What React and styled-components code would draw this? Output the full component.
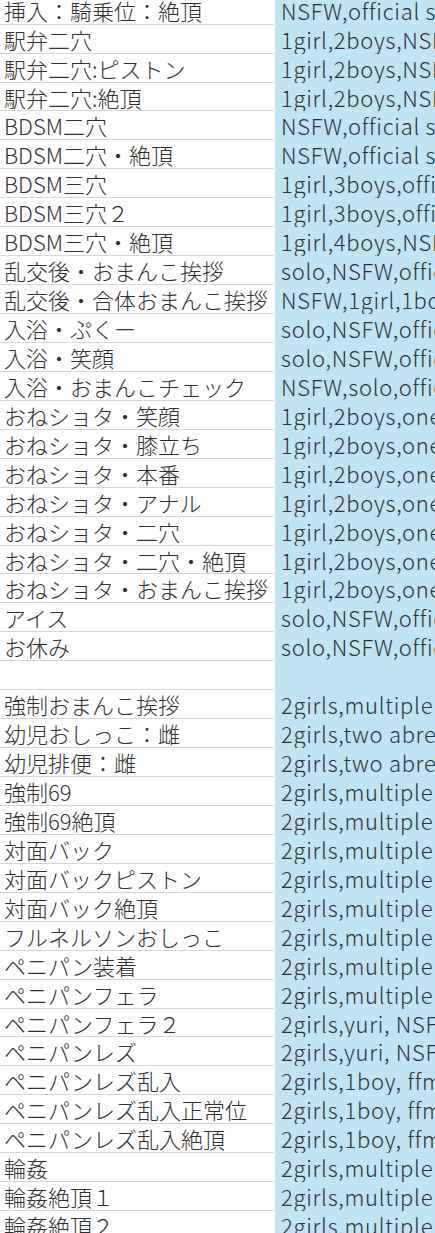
import React from 'react';
import styled, { createGlobalStyle } from 'styled-components';

const GlobalStyle = createGlobalStyle`
  html, body {
    margin: 0;
    padding: 0;
    background: #ffffff;
    overflow: hidden;
  }
  body {
    font-family: "Noto Sans CJK JP", "Noto Sans", sans-serif;
  }
`;

const rows = [
  ['挿入：騎乗位：絶頂', 'NSFW,official style,'],
  ['駅弁二穴', '1girl,2boys,NSFW,'],
  ['駅弁二穴:ピストン', '1girl,2boys,NSFW,'],
  ['駅弁二穴:絶頂', '1girl,2boys,NSFW,'],
  ['BDSM二穴', 'NSFW,official style,'],
  ['BDSM二穴・絶頂', 'NSFW,official style,'],
  ['BDSM三穴', '1girl,3boys,official'],
  ['BDSM三穴２', '1girl,3boys,official'],
  ['BDSM三穴・絶頂', '1girl,4boys,NSFW,'],
  ['乱交後・おまんこ挨拶', 'solo,NSFW,official'],
  ['乱交後・合体おまんこ挨拶', 'NSFW,1girl,1boy,'],
  ['入浴・ぷくー', 'solo,NSFW,official'],
  ['入浴・笑顔', 'solo,NSFW,official'],
  ['入浴・おまんこチェック', 'NSFW,solo,official'],
  ['おねショタ・笑顔', '1girl,2boys,onee-shota'],
  ['おねショタ・膝立ち', '1girl,2boys,onee-shota'],
  ['おねショタ・本番', '1girl,2boys,onee-shota'],
  ['おねショタ・アナル', '1girl,2boys,onee-shota'],
  ['おねショタ・二穴', '1girl,2boys,onee-shota'],
  ['おねショタ・二穴・絶頂', '1girl,2boys,onee-shota'],
  ['おねショタ・おまんこ挨拶', '1girl,2boys,onee-shota'],
  ['アイス', 'solo,NSFW,official'],
  ['お休み', 'solo,NSFW,official'],
  ['', ''],
  ['強制おまんこ挨拶', '2girls,multiple boys,'],
  ['幼児おしっこ：雌', '2girls,two abreast,'],
  ['幼児排便：雌', '2girls,two abreast,'],
  ['強制69', '2girls,multiple boys,'],
  ['強制69絶頂', '2girls,multiple boys,'],
  ['対面バック', '2girls,multiple boys,'],
  ['対面バックピストン', '2girls,multiple boys,'],
  ['対面バック絶頂', '2girls,multiple boys,'],
  ['フルネルソンおしっこ', '2girls,multiple boys,'],
  ['ペニパン装着', '2girls,multiple boys,'],
  ['ペニパンフェラ', '2girls,multiple boys,'],
  ['ペニパンフェラ２', '2girls,yuri, NSFW,'],
  ['ペニパンレズ', '2girls,yuri, NSFW,'],
  ['ペニパンレズ乱入', '2girls,1boy, ffm'],
  ['ペニパンレズ乱入正常位', '2girls,1boy, ffm'],
  ['ペニパンレズ乱入絶頂', '2girls,1boy, ffm'],
  ['輪姦', '2girls,multiple boys,'],
  ['輪姦絶頂１', '2girls,multiple boys,'],
  ['輪姦絶頂２', '2girls,multiple boys,'],
];

const Sheet = styled.div`
  margin-top: -4.3px;
  width: 600px;
`;

const Row = styled.div`
  display: grid;
  grid-template-columns: 274px 1fr;
  column-gap: 1px;
  height: 28.95px;
`;

const NameCell = styled.div`
  box-sizing: border-box;
  height: 100%;
  padding: 0 0 0 4px;
  border-bottom: 1.5px solid #d6d6d6;
  font-size: 22px;
  font-weight: 300;
  line-height: 28px;
  color: #303030;
  white-space: nowrap;
  overflow: hidden;
`;

const PromptCell = styled.div`
  box-sizing: border-box;
  height: 100%;
  padding: 0 0 0 6px;
  background: #c0e4f4;
  font-size: 22px;
  font-weight: 300;
  letter-spacing: 0.7px;
  line-height: 28px;
  color: #303030;
  white-space: nowrap;
  overflow: hidden;
`;

export default function App() {
  return (
    <>
      <GlobalStyle />
      <Sheet>
        {rows.map(([name, prompt], i) => (
          <Row key={i}>
            <NameCell>{name}</NameCell>
            <PromptCell>{prompt}</PromptCell>
          </Row>
        ))}
      </Sheet>
    </>
  );
}
